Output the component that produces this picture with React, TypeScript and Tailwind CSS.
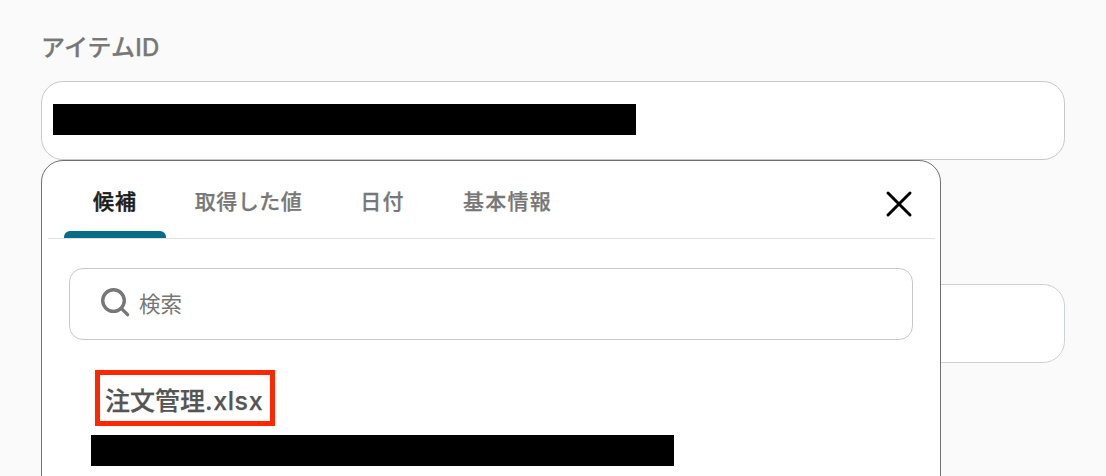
import { useState } from 'react';

type Tab = {
  id: string;
  label: string;
  className: string;
};

const tabs: Tab[] = [
  {
    id: 'candidates',
    label: '候補',
    className: 'ml-[16px] w-[102px] tracking-[1px]',
  },
  { id: 'values', label: '取得した値', className: 'w-[165px] tracking-[0.5px]' },
  { id: 'date', label: '日付', className: 'w-[103px] tracking-[1.2px]' },
  { id: 'basic', label: '基本情報', className: 'w-[147px] tracking-[1.2px]' },
];

function SearchIcon() {
  return (
    <svg
      className="h-[32px] w-[32px] shrink-0"
      viewBox="0 0 32 32"
      fill="none"
      stroke="#777777"
      strokeWidth="3.4"
      strokeLinecap="round"
    >
      <circle cx="13.5" cy="12.6" r="10.8" />
      <path d="M21.3 20.4 27.6 26.6" />
    </svg>
  );
}

function CloseIcon() {
  return (
    <svg
      className="h-[28px] w-[28px]"
      viewBox="0 0 28 28"
      fill="none"
      stroke="#000000"
      strokeWidth="3"
      strokeLinecap="round"
    >
      <path d="M3 3 25 25M25 3 3 25" />
    </svg>
  );
}

function SuggestionPanel() {
  const [active, setActive] = useState('candidates');

  return (
    <div className="absolute left-0 top-full h-[400px] w-[900px] rounded-[22px] border border-[#707070] bg-white">
      <div className="ml-[6px] mr-[5px] flex h-[78px] border-b border-[#e0e0e0]">
        {tabs.map((tab) => (
          <button
            key={tab.id}
            onClick={() => setActive(tab.id)}
            className={`flex flex-col items-center whitespace-nowrap text-[21px] font-medium leading-[32px] ${tab.className} ${
              active === tab.id
                ? 'text-[#1c1c1c] [-webkit-text-stroke:0.5px_#1c1c1c]'
                : 'text-[#777777] [-webkit-text-stroke:0.25px_#777777]'
            }`}
          >
            <span className="mt-[25px]">{tab.label}</span>
            {active === tab.id && (
              <span className="mt-auto h-[7px] w-full rounded-t-[6px] bg-[#086c86]" />
            )}
          </button>
        ))}
        <button className="mr-[22px] ml-auto mt-[29px] h-[28px]">
          <CloseIcon />
        </button>
      </div>

      <div className="mx-[27px] mt-[29px] flex h-[72px] items-center rounded-[14px] border border-[#c8c8c8] pl-[30px]">
        <SearchIcon />
        <span className="ml-[7px] text-[21.5px] leading-[32px] text-[#777777]">
          検索
        </span>
      </div>

      <div className="ml-[53px] mt-[30px] flex h-[56px] w-[180px] items-center border-[5px] border-[#ff2600] pl-[5px] pt-[5px]">
        <span className="whitespace-nowrap text-[25px] font-medium leading-[36px] text-[#555555] [-webkit-text-stroke:0.25px_#555555]">
          注文管理<span className="tracking-[0.6px]">.xlsx</span>
        </span>
      </div>
      <div className="ml-[49px] mt-[9px] h-[31px] w-[583px] bg-black" />
    </div>
  );
}

export default function App() {
  return (
    <div className="h-[476px] w-[1106px] overflow-hidden bg-[#fafafa] px-[41px] pt-[31px] font-['Inter','Noto_Sans_CJK_JP',sans-serif]">
      <div className="h-[50px] text-[24px] font-medium leading-[34px] tracking-[0.15px] text-[#777777] [-webkit-text-stroke:0.25px_#777777]">
        アイテムID
      </div>
      <div className="relative">
        <div className="flex h-[79px] items-start rounded-[22px] border border-[#c8c8c8] bg-white pl-[11px] pt-[22px]">
          <div className="h-[31px] w-[583px] bg-black" />
        </div>
        <SuggestionPanel />
      </div>
      <div className="mt-[124px] h-[79px] rounded-[22px] border border-[#cbd2da] bg-white" />
    </div>
  );
}
